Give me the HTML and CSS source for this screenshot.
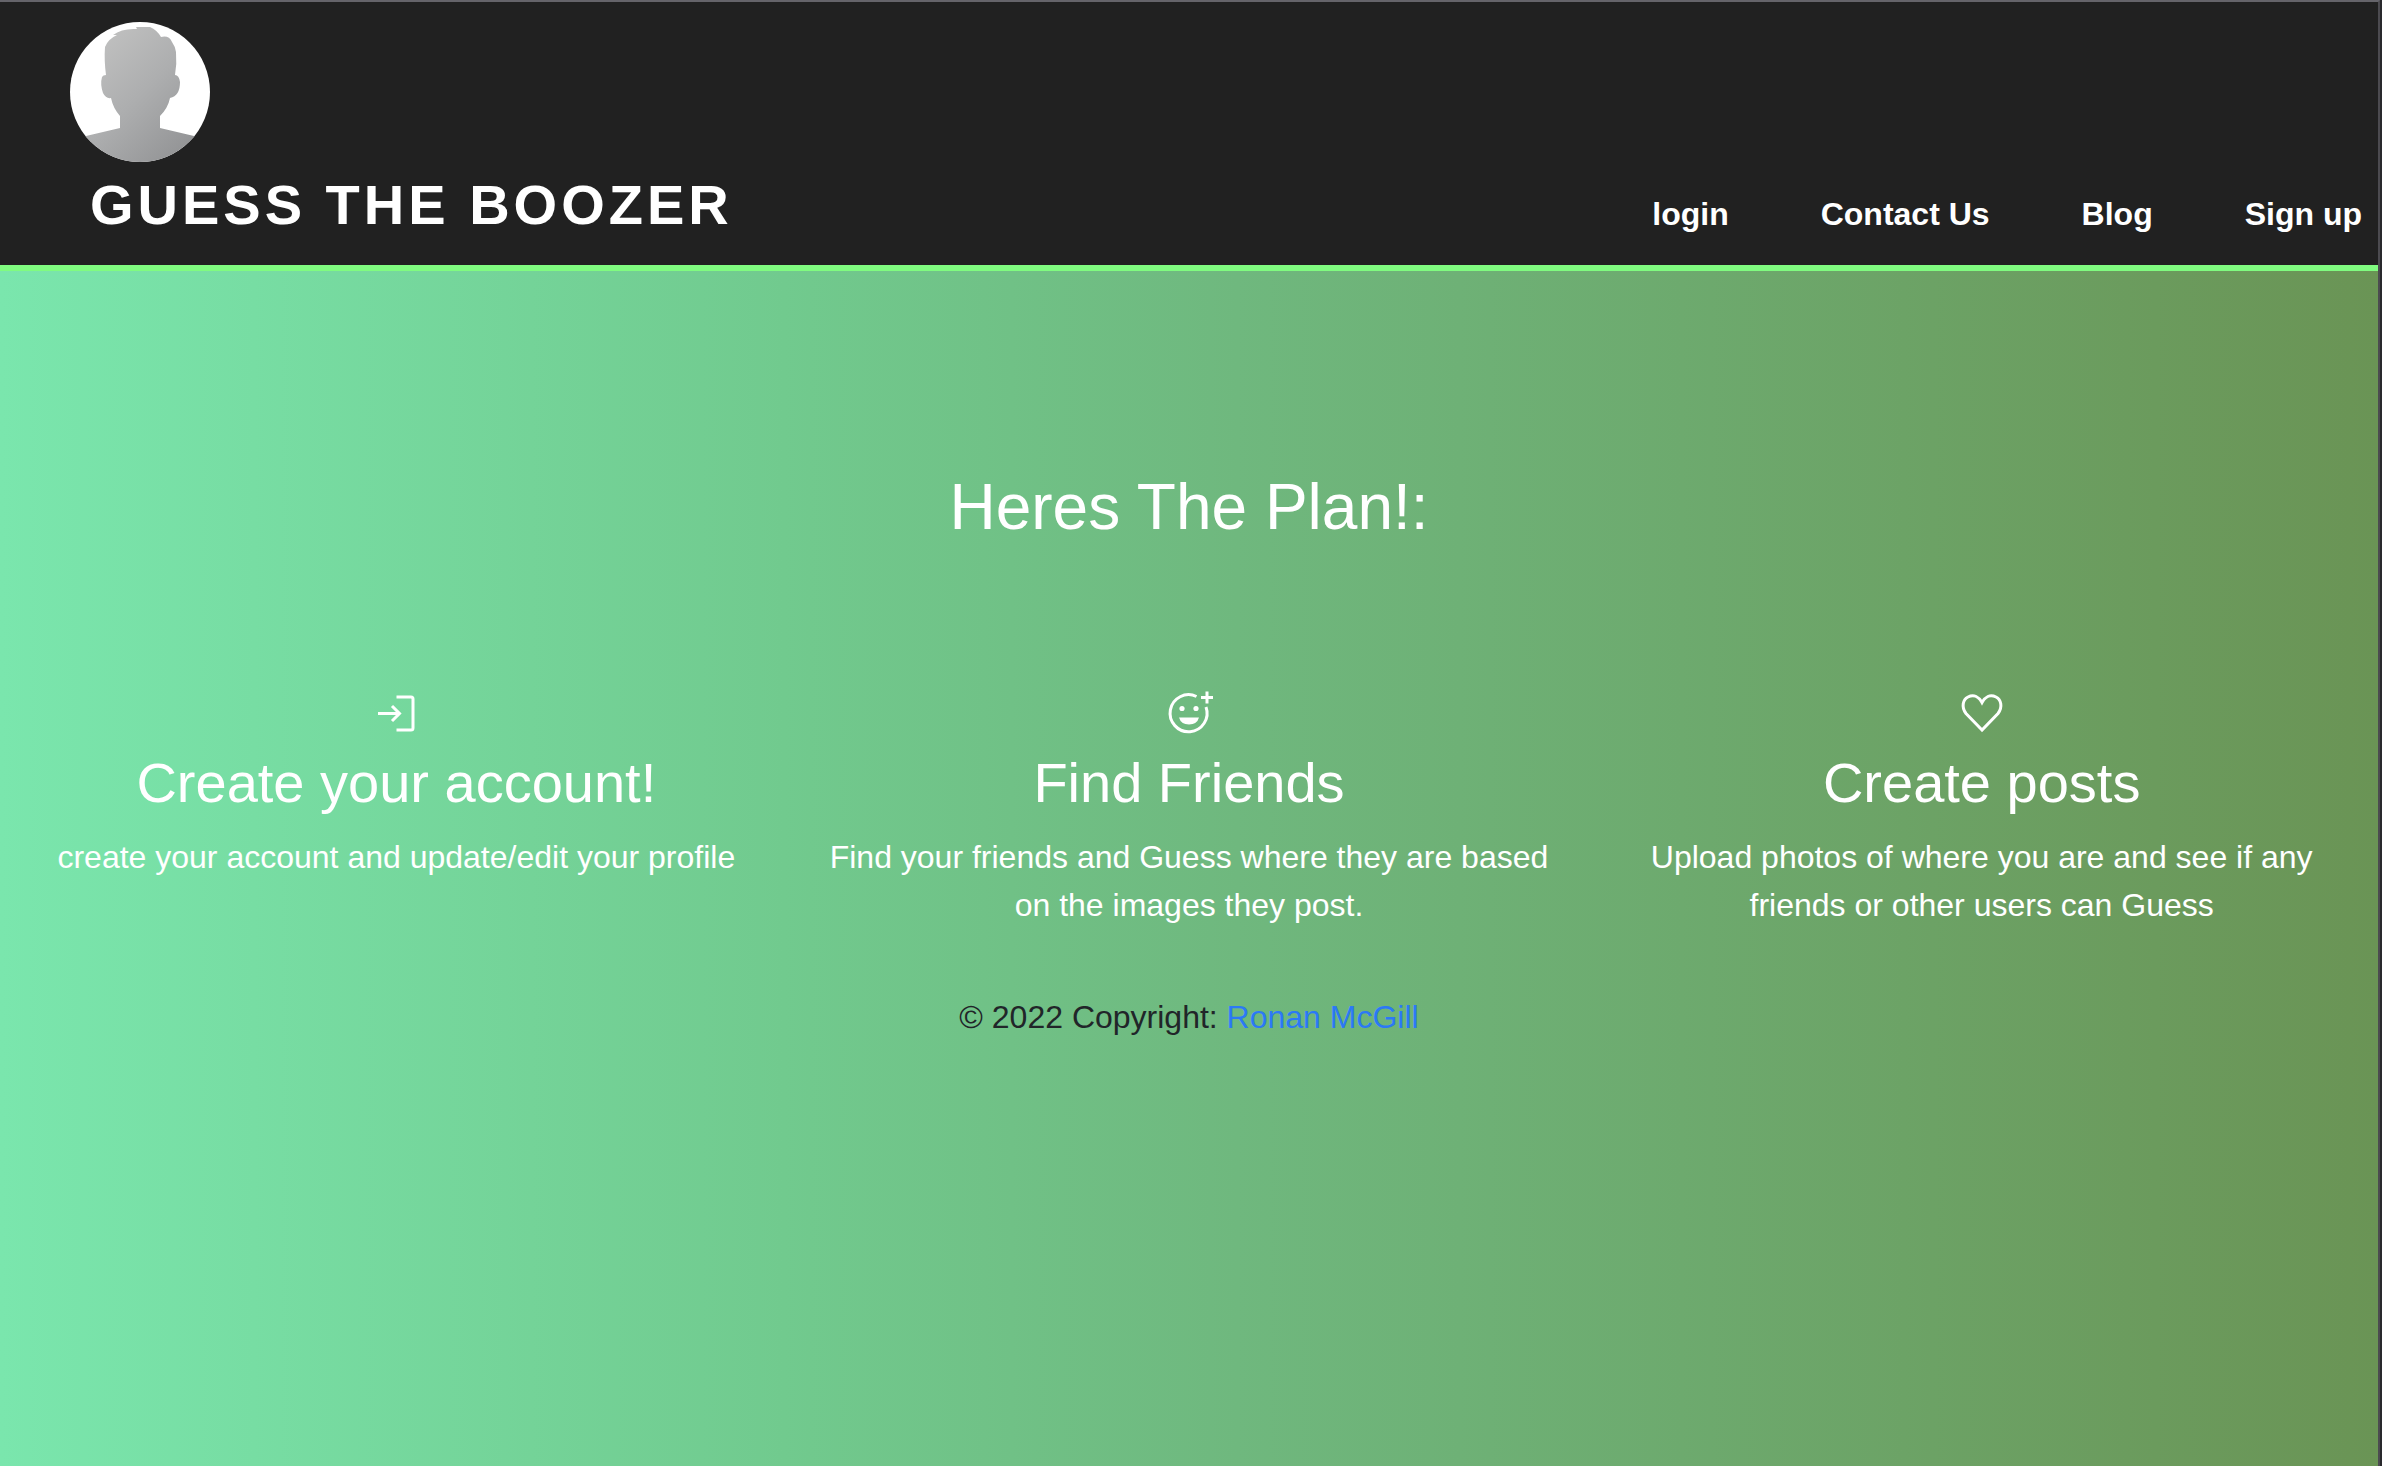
FILE: index.html
```html
<!DOCTYPE html>
<html lang="en">
<head>
<meta charset="utf-8">
<title>Guess The Boozer</title>
<link rel="stylesheet" href="styles.css">
</head>
<body>
<div class="page">
  <header class="header">
    <div class="brand">
      <svg class="avatar" viewBox="0 0 140 140" role="img" aria-label="Profile picture">
        <defs>
          <linearGradient id="skin" x1="0" y1="0" x2="1" y2="1">
            <stop offset="0" stop-color="#c8c8c7"/>
            <stop offset="0.500" stop-color="#adaeaf"/>
            <stop offset="1" stop-color="#8a8b8d"/>
          </linearGradient>
          <clipPath id="round"><circle cx="70" cy="70" r="70"/></clipPath>
        </defs>
        <g clip-path="url(#round)">
          <rect width="140" height="140" fill="#fff"/>
          <path fill="url(#skin)" d="M0 120 L16 114 L50 106 V94 Q43 86 41 76 Q36 77 33 71 Q30 62 32 55 Q33 53 36 53 Q34 38 35 25 Q38 17 47 13 L43 13 Q52 6 67 7 L66 5 L80 5 Q87 8 91 15 Q99 13 102 20 Q105 24 106 30 Q107 42 105 53 Q109 53 110 60 Q110 74 100 76 Q98 86 90 94 V106 L124 114 L140 120 V140 H0 Z"/>
        </g>
      </svg>
      <a class="brand-name" href="#">GUESS THE BOOZER</a>
    </div>
    <nav class="nav">
      <a href="#">login</a>
      <a href="#">Contact Us</a>
      <a href="#">Blog</a>
      <a href="#">Sign up</a>
    </nav>
  </header>
  <main class="main">
    <h1 class="title">Heres The Plan!:</h1>
    <div class="steps">
      <section class="step">
        <svg class="icon" viewBox="0 0 48 48" aria-hidden="true"><path d="M24.500 8H39Q41 8 41 10V39Q41 41 39 41H24.500M6 24.500H28M20 17L27.500 24.500L20 32"/></svg>
        <h2>Create your account!</h2>
        <p>create your account and update/edit your profile</p>
      </section>
      <section class="step">
        <svg class="icon" viewBox="0 0 48 48" aria-hidden="true"><path d="M31.500 7.500A18.500 18.500 0 1 0 41 18M36 8.500H48M42 2.500V14.500"/><g class="solid"><circle cx="17" cy="19.500" r="2.600"/><circle cx="31" cy="19.500" r="2.600"/><path d="M14 28.500H34Q32 35.500 24 35.500Q16 35.500 14 28.500Z"/></g></svg>
        <h2>Find Friends</h2>
        <p>Find your friends and Guess where they are based on the images they post.</p>
      </section>
      <section class="step">
        <svg class="icon" viewBox="0 0 48 48" aria-hidden="true"><path d="M24 41L8 24.500C3 18 5 10.500 10 8C16 5 21 8 24 13.500C27 8 32 5 38 8C43 10.500 45 18 40 24.500Z"/></svg>
        <h2>Create posts</h2>
        <p>Upload photos of where you are and see if any friends or other users can Guess</p>
      </section>
    </div>
  </main>
  <footer class="footer">© 2022 Copyright: <a href="#">Ronan McGill</a></footer>
</div>
</body>
</html>
```
FILE: styles.css
```css
* { box-sizing: border-box; }
body {
  margin: 0;
  padding-right: 2px;
  background: #29292d;
  font-family: "Liberation Sans", Arial, sans-serif;
  font-size: 32px;
  line-height: 48px;
  color: #212529;
}
a { text-decoration: none; }
.page {
  min-height: 100vh;
  border-top: 2px solid #65646a;
  border-right: 2px solid #4c4b50;
  background: linear-gradient(to right, #7ae6ad, #71ca8e 33%, #6fb87e 52%, #6a9455);
}
.header {
  display: flex;
  justify-content: space-between;
  align-items: flex-end;
  padding: 20px 16px 24px 70px;
  background: #212121;
  border-bottom: 6px solid #80fb80;
}
.brand { display: flex; flex-direction: column; }
.avatar { display: block; width: 140px; height: 140px; }
.brand-name {
  margin: 7px 0 0 20px;
  font-size: 56px;
  line-height: 72px;
  font-weight: 700;
  letter-spacing: 4px;
  color: #fff;
}
.nav { display: flex; gap: 92px; padding-bottom: 3px; }
.nav a { font-weight: 700; color: #fff; }
.main { padding: 198px 0 0; color: #fff; text-align: center; }
.title { margin: 0; font-size: 64px; line-height: 76px; font-weight: 400; }
.steps {
  display: grid;
  grid-template-columns: repeat(3, 1fr);
  padding-top: 144px;
}
.step { padding: 0 24px; }
.icon {
  display: block;
  width: 48px;
  height: 48px;
  margin: 0 auto 12px;
  fill: none;
  stroke: #fff;
  stroke-width: 3;
}
.icon .solid { fill: #fff; stroke: none; }
.step h2 { margin: 0 0 16px; font-size: 56px; line-height: 68px; font-weight: 400; }
.step p { margin: 0; }
.footer { padding: 64px 32px 32px; text-align: center; }
.footer a { color: #2b79f6; }
```
